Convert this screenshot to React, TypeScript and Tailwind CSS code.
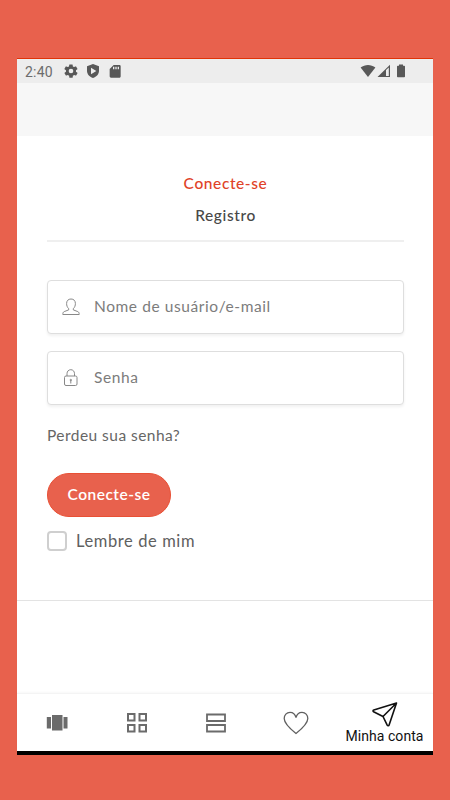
import type { ReactNode } from 'react';

function StatusBar() {
    return (
        <div className="flex h-6 items-center justify-between bg-[#ededed] pl-2 pr-[27px] text-[#585858]">
            <div className="flex items-center">
                <span className="w-[38px] font-['Roboto',sans-serif] text-[14px] leading-6 tracking-[0.2px] pt-[2px] text-[#6c6c6c]">2:40</span>
                {/* Settings */}
                <svg className="h-4 w-4" viewBox="0 0 24 24" fill="currentColor">
                    <path d="M19.4 13c0-.3.1-.6.1-1s0-.7-.1-1l2.1-1.600c.2-.2.3-.4.1-.6l-2-3.500c-.1-.2-.4-.3-.6-.2l-2.500 1c-.5-.4-1.100-.7-1.700-1l-.4-2.600c0-.2-.2-.4-.5-.4h-4c-.2 0-.4.200-.5.400l-.4 2.600c-.6.3-1.200.6-1.700 1l-2.500-1c-.2-.1-.5 0-.6.200l-2 3.500c-.1.200-.1.500.1.600L4.500 11c0 .3-.1.700-.1 1s0 .7.100 1l-2.100 1.700c-.2.100-.3.400-.1.600l2 3.400c.1.200.4.300.6.200l2.500-1c.5.400 1.100.8 1.700 1l.4 2.700c0 .2.200.4.500.4h4c.2 0 .5-.2.500-.4l.4-2.700c.6-.2 1.200-.6 1.700-1l2.500 1c.2.100.5 0 .6-.2l2-3.400c.1-.2.1-.5-.1-.6L19.400 13zM12 15.500a3.500 3.500 0 1 1 0-7 3.500 3.500 0 0 1 0 7z" />
                </svg>
                {/* Play protect */}
                <svg className="ml-[6px] h-4 w-4" viewBox="0 0 24 24" fill="currentColor">
                    <path fillRule="evenodd" d="M12 1.500 3 5v6.500c0 5 3.500 9 9 11 5.500-2 9-6 9-11V5l-9-3.500zM9 7l8 5-8 5V7z" />
                </svg>
                {/* SD card */}
                <svg className="ml-[6px] h-4 w-4" viewBox="0 0 24 24" fill="currentColor">
                    <path fillRule="evenodd" d="M19 3H10L4 9v11c0 1.100.9 2 2 2h13c.9 0 1.500-.9 1.500-2V5c0-1.100-.7-2-1.500-2zM9 5.500h2v4H9v-4zm3.500 0h2v4h-2v-4zM16 5.500h2v4h-2v-4z" />
                </svg>
            </div>
            <div className="flex items-center">
                <svg className="h-3.5 w-4" viewBox="0 0 16 14" fill="currentColor">
                    <path d="M.6 3.600C5 .2 11 .2 15.400 3.600L8 13z" />
                </svg>
                <svg className="ml-px h-3.5 w-3.5" viewBox="0 0 14 14" fill="currentColor">
                    <path fillRule="evenodd" d="M.5 13 13 .7V13H.5zM9 6v6h2.800V3.500z" />
                </svg>
                <svg className="ml-[5px] h-3.5 w-2.5" viewBox="0 0 10 14" fill="currentColor">
                    <path d="M3 .6h4v1.200h1.200c.5 0 .8.300.8.800v10c0 .4-.3.700-.8.700H1.800c-.5 0-.8-.3-.8-.7v-10c0-.5.300-.8.800-.8H3z" />
                </svg>
            </div>
        </div>
    );
}

function UserIcon() {
    return (
        <svg className="h-[18px] w-[18px]" viewBox="0 0 18 18" fill="none" stroke="#888" strokeWidth="1">
            <path d="M6.700 10.700C5.200 9.300 4.600 7.400 4.600 5.500 4.600 2.700 6.300 1 9 1s4.400 1.700 4.400 4.500c0 1.900-.6 3.800-2.100 5.200v1.200l4.500 1.700c1.100.5 1.400 1.400 1.400 2.900H.8c0-1.500.3-2.400 1.400-2.900l4.500-1.700z" />
        </svg>
    );
}

function LockIcon() {
    return (
        <svg className="h-[18px] w-[18px]" viewBox="0 0 18 18" fill="none" stroke="#888" strokeWidth="1">
            <rect x="2.500" y="7" width="12.500" height="9.500" rx="1.500" />
            <path d="M5 7V4.700C5 2.300 6.600.7 8.800.7s3.700 1.600 3.700 4V7M8.800 11v3.500" />
            <circle cx="8.800" cy="11" r=".7" />
        </svg>
    );
}

function Field({ icon, label }: { icon: ReactNode; label: string }) {
    return (
        <div className="flex h-[54px] items-center rounded-[4px] border border-[#dedede] bg-white pl-[14px] text-[15.5px] tracking-[0.58px] text-[#7c7c7c] shadow-[0_2px_3px_rgba(0,0,0,0.06)]">
            {icon}
            <div className="ml-[14px]">{label}</div>
        </div>
    );
}

function BottomNav() {
    return (
        <div className="flex h-[58px] border-t border-[#f4f4f4] bg-white text-[#6b6b6b] shadow-[0_-1px_2px_rgba(0,0,0,0.03)]">
            <div className="flex w-20 items-center justify-center">
                <svg className="h-6 w-6" viewBox="0 0 24 24" fill="currentColor">
                    <path d="M7 4h10.500v15.500H7zM1.800 6H6v11.500H1.800zM18.500 6h4v11.500h-4z" />
                </svg>
            </div>
            <div className="flex w-[79px] items-center justify-center">
                <svg className="h-6 w-6" viewBox="0 0 24 24" fill="none" stroke="currentColor" strokeWidth="2">
                    <path d="M3 3h6.500v6.500H3zM14.500 3H21v6.500h-6.500zM3 14h6.500v6.500H3zM14.500 14H21v6.500h-6.500z" />
                </svg>
            </div>
            <div className="flex w-20 items-center justify-center">
                <svg className="h-6 w-6" viewBox="0 0 24 24" fill="none" stroke="currentColor" strokeWidth="1.800">
                    <path d="M3 3.500h18v6.500H3zM3 14h18v6.500H3z" />
                </svg>
            </div>
            <div className="flex w-20 items-center justify-center">
                <svg className="h-6 w-[26px]" viewBox="0 0 26 24" fill="none" stroke="#606060" strokeWidth="1.300">
                    <path d="M13 22.500C8 18.500 1.200 13 1.200 7.500 1.200 4 3.600 1.300 7 1.300c3 0 5.200 2 6 5.200.8-3.200 3-5.200 6-5.200 3.400 0 5.800 2.700 5.800 6.200C24.800 13 18 18.500 13 22.500z" />
                </svg>
            </div>
            <div className="flex flex-1 flex-col items-center pt-[7px] text-[#111]">
                <svg className="h-[26px] w-[26px]" viewBox="0 0 26 26" fill="none" stroke="currentColor" strokeWidth="1.600" strokeLinejoin="round">
                    <path d="M24.500 2 1.800 8.900C.8 9.200.8 10.200 1.600 10.700L11 15.500l4.200 8.700c.5.900 1.600.8 1.900-.2L24.500 2zM24.500 2 11 15.500" />
                </svg>
                <span className="mt-px whitespace-nowrap font-['Roboto',sans-serif] text-[14px] leading-[17px] tracking-[0.05px]">Minha conta</span>
            </div>
        </div>
    );
}

export default function App() {
    return (
        <div className="h-[800px] w-[450px] bg-[#e8614d] pt-[58px] font-['Lato',sans-serif]">
            <div className="ml-[17px] flex h-[697px] w-[416px] flex-col border-t border-[#e03408] bg-white">
                <StatusBar />
                <div className="h-[53px] bg-[#f7f7f7]" />

                {/* Tabs */}
                <div className="ml-[30px] mr-[29px] flex h-[106px] flex-col items-center border-b-2 border-[#efefef] pt-[31px] text-[15.5px] font-medium leading-8 tracking-[0.6px]">
                    <div className="text-[#e04328]">Conecte-se</div>
                    <div className="text-[#484848]">Registro</div>
                </div>

                {/* Login form */}
                <div className="ml-[30px] mr-[29px] mt-[38px] flex flex-col">
                    <Field icon={<UserIcon />} label="Nome de usuário/e-mail" />
                    <div className="h-[17px]" />
                    <Field icon={<LockIcon />} label="Senha" />
                    <div className="mt-[18px] text-[15.5px] leading-6 tracking-[0.46px] text-[#666]">Perdeu sua senha?</div>
                    <button className="mt-[26px] h-11 w-[124px] rounded-full border border-[#e85035] bg-[#e8614d] text-[15.5px] font-semibold tracking-[0.5px] text-white">
                        Conecte-se
                    </button>
                    <label className="mt-[11px] flex items-center">
                        <span className="h-5 w-5 rounded-[4px] border-2 border-[#cfcfcf]" />
                        <span className="ml-[9px] pt-px text-[16.5px] leading-6 tracking-[0.6px] text-[#606060]">Lembre de mim</span>
                    </label>
                </div>

                <div className="mt-[47px] h-px bg-[#e3e3e3]" />

                <div className="mt-auto">
                    <BottomNav />
                    <div className="h-1 bg-black" />
                </div>
            </div>
        </div>
    );
}
